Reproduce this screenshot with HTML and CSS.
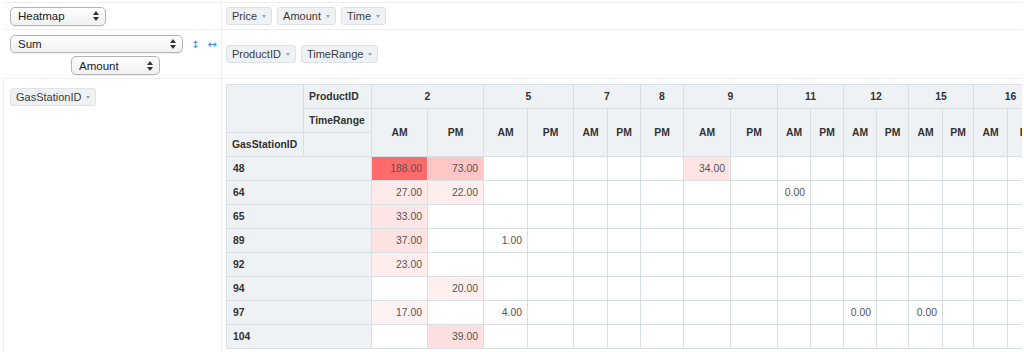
FILE: index.html
```html
<!DOCTYPE html>
<html lang="en">
<head>
  <meta charset="UTF-8">
  <meta name="viewport" content="width=device-width, initial-scale=1.0">
  <title>Pivot Table</title>
  <link rel="stylesheet" href="styles.css">
</head>
<body>
  <div class="pvt-ui">
    <div class="pvt-cell pvt-renderers">
      <div class="dropdown dropdown-renderer">
        <select><option>Heatmap</option></select>
        <svg class="dropdown-arrows" width="6" height="10" viewBox="0 0 6 10"><path d="M3 0L6 4H0Z M3 10L0 6H6Z" fill="#333"/></svg>
      </div>
    </div>
    <div class="pvt-cell pvt-unused">
      <span class="pvt-attr">Price<span class="caret"></span></span>
      <span class="pvt-attr">Amount<span class="caret"></span></span>
      <span class="pvt-attr">Time<span class="caret"></span></span>
    </div>
    <div class="pvt-cell pvt-vals">
      <div class="vals-row">
        <div class="dropdown dropdown-agg">
          <select><option>Sum</option></select>
          <svg class="dropdown-arrows" width="6" height="10" viewBox="0 0 6 10"><path d="M3 0L6 4H0Z M3 10L0 6H6Z" fill="#333"/></svg>
        </div>
        <span class="pvt-order pvt-row-order">&#8597;</span>
        <span class="pvt-order pvt-col-order">&#8596;</span>
      </div>
      <div class="dropdown dropdown-val">
        <select><option>Amount</option></select>
        <svg class="dropdown-arrows" width="6" height="10" viewBox="0 0 6 10"><path d="M3 0L6 4H0Z M3 10L0 6H6Z" fill="#333"/></svg>
      </div>
    </div>
    <div class="pvt-cell pvt-cols">
      <span class="pvt-attr">ProductID<span class="caret"></span></span>
      <span class="pvt-attr">TimeRange<span class="caret"></span></span>
    </div>
    <div class="pvt-cell pvt-rows">
      <span class="pvt-attr">GasStationID<span class="caret"></span></span>
    </div>
    <div class="pvt-cell pvt-output">
      <table class="pvt-table" id="pvt-table">
        <colgroup>
          <col class="w77"><col class="w68">
          <col class="w56"><col class="w56">
          <col class="w44"><col class="w46">
          <col class="w34"><col class="w33">
          <col class="w43">
          <col class="w47"><col class="w47">
          <col class="w33"><col class="w33">
          <col class="w33"><col class="w32">
          <col class="w34"><col class="w31">
          <col class="w34"><col class="w40">
        </colgroup>
        <thead></thead>
        <tbody></tbody>
      </table>
    </div>
  </div>

  <script>
    const colKeys = [
      ['2', 'AM'], ['2', 'PM'], ['5', 'AM'], ['5', 'PM'], ['7', 'AM'], ['7', 'PM'],
      ['8', 'PM'], ['9', 'AM'], ['9', 'PM'], ['11', 'AM'], ['11', 'PM'],
      ['12', 'AM'], ['12', 'PM'], ['15', 'AM'], ['15', 'PM'], ['16', 'AM'], ['16', 'PM']
    ];
    const rowData = [
      ['48', { '2|AM': 188, '2|PM': 73, '9|AM': 34 }],
      ['64', { '2|AM': 27, '2|PM': 22, '11|AM': 0 }],
      ['65', { '2|AM': 33 }],
      ['89', { '2|AM': 37, '5|AM': 1 }],
      ['92', { '2|AM': 23 }],
      ['94', { '2|PM': 20 }],
      ['97', { '2|AM': 17, '5|AM': 4, '12|AM': 0, '15|AM': 0 }],
      ['104', { '2|PM': 39 }]
    ];
    const MAX_VALUE = 324;

    function heatColor(x) {
      const nonRed = 255 - Math.round(255 * x / MAX_VALUE);
      return `rgb(255, ${nonRed}, ${nonRed})`;
    }

    function th(text, cls, colSpan, rowSpan) {
      const cell = document.createElement('th');
      if (text) cell.textContent = text;
      if (cls) cell.className = cls;
      if (colSpan > 1) cell.colSpan = colSpan;
      if (rowSpan > 1) cell.rowSpan = rowSpan;
      return cell;
    }

    function buildTable() {
      const thead = document.querySelector('#pvt-table thead');
      const tbody = document.querySelector('#pvt-table tbody');

      const tr1 = document.createElement('tr');
      tr1.appendChild(th('', '', 1, 2));
      tr1.appendChild(th('ProductID', 'pvt-axis-label'));
      let i = 0;
      while (i < colKeys.length) {
        let span = 1;
        while (i + span < colKeys.length && colKeys[i + span][0] === colKeys[i][0]) span++;
        tr1.appendChild(th(colKeys[i][0], 'pvt-col-label', span));
        i += span;
      }
      thead.appendChild(tr1);

      const tr2 = document.createElement('tr');
      tr2.appendChild(th('TimeRange', 'pvt-axis-label'));
      colKeys.forEach(key => tr2.appendChild(th(key[1], 'pvt-col-label', 1, 2)));
      thead.appendChild(tr2);

      const tr3 = document.createElement('tr');
      tr3.appendChild(th('GasStationID', 'pvt-axis-label'));
      tr3.appendChild(th('', ''));
      thead.appendChild(tr3);

      rowData.forEach(([label, values]) => {
        const tr = document.createElement('tr');
        tr.appendChild(th(label, 'pvt-row-label', 2));
        colKeys.forEach(key => {
          const td = document.createElement('td');
          const v = values[key.join('|')];
          if (v !== undefined) {
            td.textContent = v.toFixed(2);
            td.style.backgroundColor = heatColor(v);
          }
          tr.appendChild(td);
        });
        tbody.appendChild(tr);
      });
    }

    buildTable();
  </script>
</body>
</html>
```

FILE: styles.css
```css
body, html {
  margin: 0;
  padding: 0;
  background: #fff;
  font-family: "Liberation Sans", Arial, sans-serif;
  color: #333;
  overflow: hidden;
}
.pvt-ui {
  display: grid;
  grid-template-columns: 218px 800px;
  grid-template-rows: 27px 49px 1fr;
  margin: 2px 2px 0 4px;
  border-top: 1px solid #eceef0;
  height: 360px;
}
.pvt-cell {
  border-bottom: 1px solid #eceef0;
  box-sizing: border-box;
}
.pvt-renderers,
.pvt-vals,
.pvt-rows {
  border-right: 1px solid #eceef0;
}
.pvt-renderers {
  display: flex;
  align-items: center;
  padding-left: 6px;
}
.pvt-unused,
.pvt-cols {
  display: flex;
  align-items: center;
  gap: 5px;
  padding-left: 4px;
}
.pvt-vals {
  display: flex;
  flex-direction: column;
  align-items: center;
  padding: 5px 0 0 6px;
  gap: 3px;
}
.vals-row {
  display: flex;
  align-items: center;
  align-self: stretch;
}
.pvt-rows {
  border-left: 1px solid #eceef0;
  margin-left: -1px;
  padding: 8px 0 0 6px;
  border-bottom: none;
}
.pvt-output {
  padding: 5px 0 0 4px;
  overflow: hidden;
  border-bottom: none;
}

/* selects */
.dropdown {
  position: relative;
  display: inline-flex;
}
.dropdown select {
  appearance: none;
  -webkit-appearance: none;
  margin: 0;
  height: 19px;
  padding: 0 0 0 7px;
  border: 1px solid #b3b3b3;
  border-radius: 5px;
  background: linear-gradient(#fefefe, #f1f1f1);
  box-shadow: 0 1px 1px rgba(0, 0, 0, 0.06);
  font-family: "Liberation Sans", Arial, sans-serif;
  font-size: 11.5px;
  color: #222;
  outline: none;
}
.dropdown-arrows {
  position: absolute;
  right: 7px;
  top: 50%;
  margin-top: -5px;
  pointer-events: none;
}
.dropdown-renderer select {
  width: 96px;
}
.dropdown-agg select {
  width: 173px;
  height: 18px;
}
.dropdown-val select {
  width: 89px;
  height: 19px;
}
.pvt-order {
  font-family: "DejaVu Sans", sans-serif;
  font-size: 10px;
  color: #3b8fdc;
  cursor: pointer;
}
.pvt-row-order {
  margin-left: 8px;
}
.pvt-col-order {
  margin-left: 8px;
  font-size: 11px;
}

/* attribute chips */
.pvt-attr {
  display: inline-flex;
  align-items: center;
  box-sizing: border-box;
  height: 18px;
  padding: 0 5px 0 5px;
  background: #eff2f5;
  border: 1px solid #dde2e7;
  border-radius: 3px;
  font-size: 11px;
  color: #3a3a3a;
  white-space: nowrap;
}
.caret {
  display: inline-block;
  margin-left: 5px;
  width: 0;
  height: 0;
  border-left: 2px solid transparent;
  border-right: 2px solid transparent;
  border-top: 3px solid #98a2ad;
}

/* pivot table */
.pvt-table {
  border-collapse: collapse;
  table-layout: fixed;
  width: 821px;
  font-size: 10.4px;
}
.pvt-table col.w31 { width: 31px; }
.pvt-table col.w32 { width: 32px; }
.pvt-table col.w33 { width: 33px; }
.pvt-table col.w34 { width: 34px; }
.pvt-table col.w40 { width: 40px; }
.pvt-table col.w43 { width: 43px; }
.pvt-table col.w44 { width: 44px; }
.pvt-table col.w46 { width: 46px; }
.pvt-table col.w47 { width: 47px; }
.pvt-table col.w56 { width: 56px; }
.pvt-table col.w68 { width: 68px; }
.pvt-table col.w77 { width: 77px; }
.pvt-table tr {
  height: 24px;
}
.pvt-table th,
.pvt-table td {
  border: 1px solid #d8dfe4;
  padding: 0 5px;
  white-space: nowrap;
  overflow: hidden;
}
.pvt-table th {
  background: #eff2f4;
  font-weight: bold;
  color: #333;
  text-align: left;
}
.pvt-table th.pvt-col-label {
  text-align: center;
}
.pvt-table th.pvt-row-label {
  padding-left: 6px;
}
.pvt-table td {
  text-align: right;
  color: #555;
  background: #fff;
}
```
